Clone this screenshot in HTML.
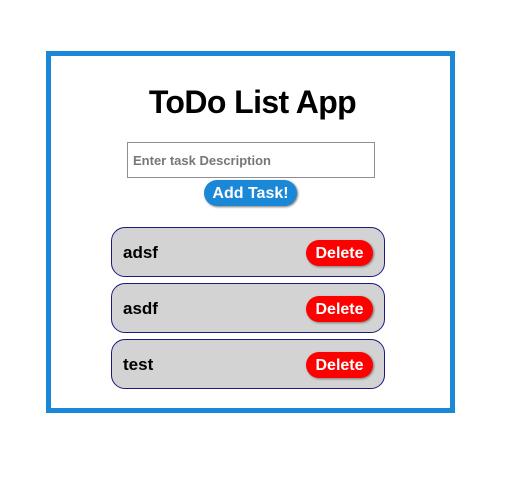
<!DOCTYPE html>
<html><head><style>
body{margin:0;width:505px;height:501px;background:#fff;font-family:"Liberation Sans",sans-serif;position:relative}
.box{position:absolute;left:46px;top:51px;width:399px;height:352px;border:5px solid #1a87d7}
h1{position:absolute;left:0;width:100%;top:84px;margin:0;text-align:center;font-size:32px;font-weight:bold;color:#000;letter-spacing:-0.6px}
.inp{position:absolute;left:127px;top:142px;width:246px;height:34px;border:1px solid #8d8d96;box-sizing:content-box}
.inp span{position:absolute;left:5px;top:10px;font-size:13px;font-weight:bold;color:#7b7575}
.add{position:absolute;left:204px;top:180px;width:93px;height:26px;border-radius:14px;background:#1a87d7;color:#fff;font-weight:bold;font-size:16px;text-align:center;line-height:27px;box-shadow:1px 1px 2px #777}
.task{position:absolute;left:111px;width:272px;height:48px;border:1px solid #1a1a80;border-radius:14px;background:#d3d3d3}
.task b{position:absolute;left:11px;top:15px;font-size:17px}
.del{position:absolute;right:11px;top:12px;width:67px;height:26px;border-radius:13px;background:#f00;color:#fff;font-weight:bold;font-size:16px;text-align:center;line-height:28px;box-shadow:1px 1px 2px #777}
</style></head><body>
<div class="box"></div>
<h1>ToDo List App</h1>
<div class="inp"><span>Enter task Description</span></div>
<div class="add">Add Task!</div>
<div class="task" style="top:227px"><b>adsf</b><div class="del">Delete</div></div>
<div class="task" style="top:283px"><b>asdf</b><div class="del">Delete</div></div>
<div class="task" style="top:339px"><b>test</b><div class="del">Delete</div></div>
</body></html>
